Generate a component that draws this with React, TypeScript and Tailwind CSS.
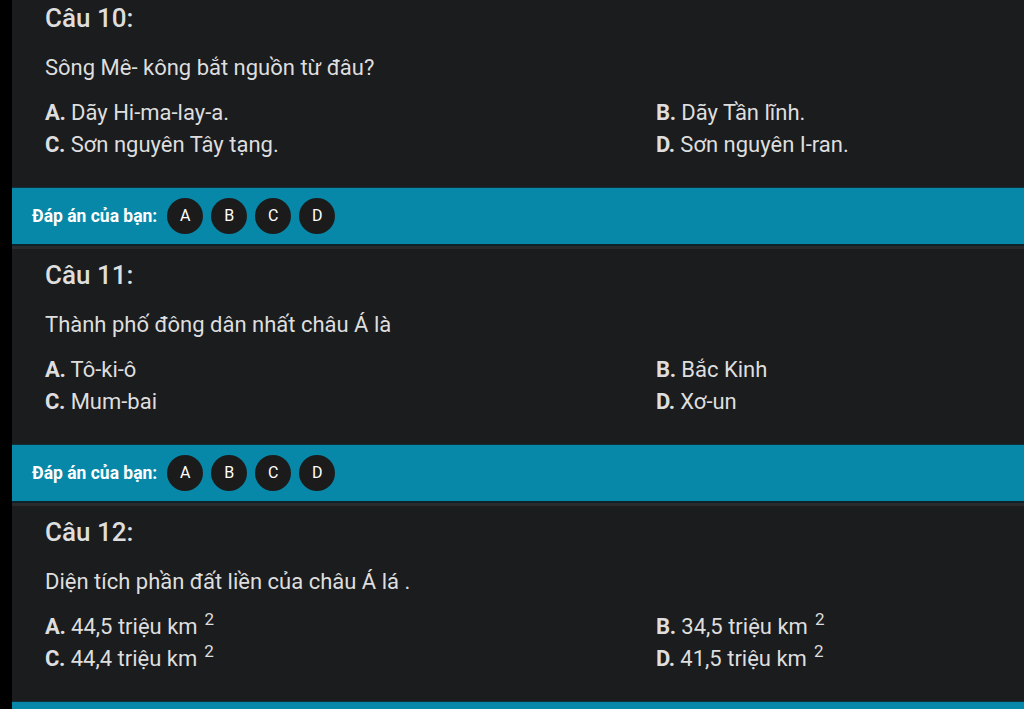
import React from "react";

type Option = { label: string; text: string; sup?: boolean };

type Question = {
  id: number;
  title: string;
  text: string;
  options: Option[];
};

const questions: Question[] = [
  {
    id: 10,
    title: "Câu 10:",
    text: "Sông Mê- kông bắt nguồn từ đâu?",
    options: [
      { label: "A.", text: "Dãy Hi-ma-lay-a." },
      { label: "B.", text: "Dãy Tần lĩnh." },
      { label: "C.", text: "Sơn nguyên Tây tạng." },
      { label: "D.", text: "Sơn nguyên I-ran." },
    ],
  },
  {
    id: 11,
    title: "Câu 11:",
    text: "Thành phố đông dân nhất châu Á là",
    options: [
      { label: "A.", text: "Tô-ki-ô" },
      { label: "B.", text: "Bắc Kinh" },
      { label: "C.", text: "Mum-bai" },
      { label: "D.", text: "Xơ-un" },
    ],
  },
  {
    id: 12,
    title: "Câu 12:",
    text: "Diện tích phần đất liền của châu Á lá .",
    options: [
      { label: "A.", text: "44,5 triệu km", sup: true },
      { label: "B.", text: "34,5 triệu km", sup: true },
      { label: "C.", text: "44,4 triệu km", sup: true },
      { label: "D.", text: "41,5 triệu km", sup: true },
    ],
  },
];

function AnswerBar() {
  return (
    <div className="border-t border-[#10303b]">
      <div className="h-[56px] bg-[#0788a8] flex items-center pl-5">
        <span className="text-[17.5px] font-bold text-white mr-[10px]">
          Đáp án của bạn:
        </span>
        <div className="flex gap-2">
          {["A", "B", "C", "D"].map((l) => (
            <div
              key={l}
              className="w-9 h-9 rounded-full bg-[#1b1b1c] text-white text-[16px] flex items-center justify-center"
            >
              {l}
            </div>
          ))}
        </div>
      </div>
      <div className="h-[2px] bg-[#0e222a]" />
      <div className="h-[3px] bg-[#2a2a2c]" />
    </div>
  );
}

function QuestionCard({ q }: { q: Question }) {
  return (
    <div>
      <div className="h-[195px] pl-[33px] pt-[10px]">
        <div className="text-[26px] leading-8 font-medium text-[#dedede]">
          {q.title}
        </div>
        <div className="mt-5 text-[22px] leading-7 text-[#dedede]">{q.text}</div>
        <div className="mt-[15px] grid grid-cols-[611px_1fr] text-[22px] leading-8 text-[#dedede]">
          {q.options.map((o) => (
            <div key={o.label} className="whitespace-nowrap">
              <span className="font-bold tracking-[-0.3px]">{o.label}</span>{" "}
              <span>{o.text}</span>
              {o.sup && (
                <sup className="ml-[7px] text-[17px] relative top-[-9px]">2</sup>
              )}
            </div>
          ))}
        </div>
      </div>
      <AnswerBar />
    </div>
  );
}

export default function App() {
  return (
    <div
      className="w-[1024px] h-[709px] overflow-hidden flex bg-black"
      style={{ fontFamily: "Roboto, 'Noto Sans', sans-serif" }}
    >
      <div className="w-[12px] shrink-0 bg-black" />
      <div className="flex-1 bg-[#1b1c1e] overflow-hidden">
        <div className="-mt-[8px]">
          {questions.map((q) => (
            <QuestionCard key={q.id} q={q} />
          ))}
        </div>
      </div>
    </div>
  );
}
